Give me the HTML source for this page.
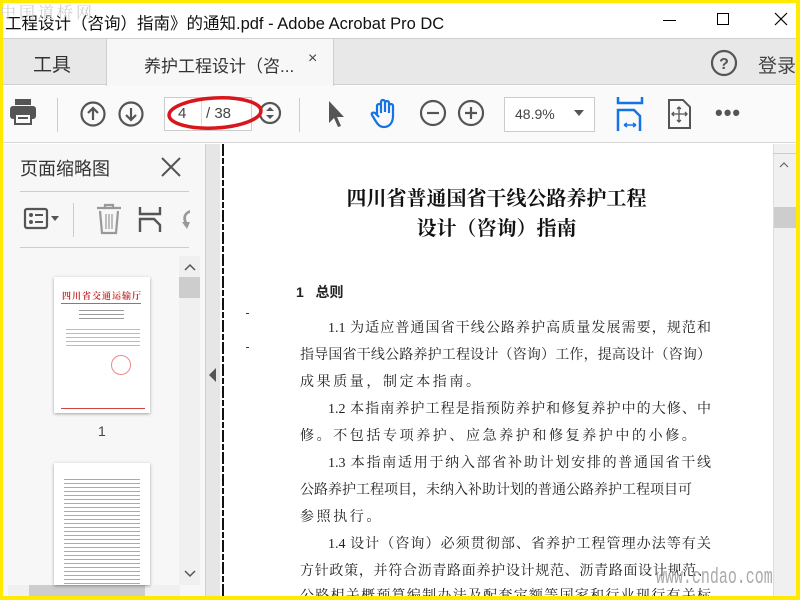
<!DOCTYPE html>
<html><head><meta charset="utf-8">
<style>
*{margin:0;padding:0;box-sizing:border-box}
body{width:800px;height:600px;overflow:hidden;background:#ffea00;font-family:"Liberation Sans","Noto Sans CJK SC",sans-serif;position:relative}
.a{position:absolute}
#win{left:3px;top:3px;width:793px;height:593px;background:#fff;overflow:hidden}
.doc{font-family:"Liberation Serif","Noto Serif CJK SC",serif;color:#222;font-size:14px}
.ln{position:absolute;left:297px;width:411px;text-align:justify;text-align-last:justify;white-space:nowrap;height:18px;line-height:18px}
.ic{stroke:#555;fill:none;stroke-width:2.2}
</style></head><body>
<div class="a" style="left:0;top:0;font-size:16px;color:#cfcfcf;letter-spacing:3px;z-index:5;font-family:'Noto Serif CJK SC',serif">中国道桥网</div>
<div class="a" id="win">
 <div class="a" style="left:0;top:0;width:793px;height:35px;background:#fff"></div>
 <div class="a" style="left:2px;top:7px;font-size:16.5px;color:#111;white-space:nowrap">工程设计（咨询）指南》的通知.pdf - Adobe Acrobat Pro DC</div>
 <div class="a" style="left:660px;top:17px;width:13px;height:1px;background:#000"></div>
 <div class="a" style="left:714px;top:10px;width:12px;height:12px;border:1px solid #000"></div>
 <svg class="a" style="left:771px;top:9px" width="14" height="14"><path d="M1 1L13 13M13 1L1 13" stroke="#000" stroke-width="1.2"/></svg>
 <div class="a" style="left:0;top:35px;width:793px;height:47px;background:#e8e8e8;border-top:1px solid #cfcfcf;border-bottom:1px solid #cfcfcf"></div>
 <div class="a" style="left:30px;top:47px;font-size:19px;color:#333">工具</div>
 <div class="a" style="left:103px;top:36px;width:228px;height:47px;background:#f7f7f7;border-left:1px solid #cfcfcf;border-right:1px solid #cfcfcf"></div>
 <div class="a" style="left:141px;top:49px;font-size:17px;color:#333;white-space:nowrap">养护工程设计（咨...</div>
 <div class="a" style="left:305px;top:47px;font-size:16px;color:#444">×</div>
 <svg class="a" style="left:707px;top:46px" width="28" height="28"><circle cx="14" cy="14" r="12" class="ic" stroke-width="2"/><text x="14" y="20" text-anchor="middle" font-size="16" font-weight="bold" fill="#555" font-family="Liberation Sans">?</text></svg>
 <div class="a" style="left:755px;top:48px;font-size:19px;color:#444">登录</div>
 <div class="a" style="left:0;top:83px;width:793px;height:57px;background:#fafafa;border-bottom:1px solid #d8d8d8"></div>
 <svg class="a" style="left:6px;top:95px" width="30" height="28"><rect x="6" y="1" width="16" height="6" fill="#555"/><rect x="1" y="8" width="26" height="13" rx="3" fill="#555"/><rect x="6" y="16" width="16" height="10" fill="#fafafa" stroke="#555" stroke-width="2"/><rect x="9" y="19" width="10" height="2" fill="#555"/></svg>
 <div class="a" style="left:54px;top:95px;width:1px;height:34px;background:#ccc"></div>
 <svg class="a" style="left:76px;top:97px" width="28" height="28"><circle cx="14" cy="14" r="11.5" class="ic"/><path d="M14 20V8M9 13l5-5 5 5" class="ic"/></svg>
 <svg class="a" style="left:114px;top:97px" width="28" height="28"><circle cx="14" cy="14" r="11.5" class="ic"/><path d="M14 8v12M9 15l5 5 5-5" class="ic"/></svg>
 <div class="a" style="left:161px;top:94px;width:88px;height:34px;border:1px solid #ccc;background:#fff"></div>
 <div class="a" style="left:198px;top:95px;width:1px;height:32px;background:#ddd"></div>
 <div class="a" style="left:175px;top:102px;font-size:15px;color:#444">4</div>
 <div class="a" style="left:203px;top:102px;font-size:15px;color:#444">/ 38</div>
 <svg class="a" style="left:254px;top:97px" width="28" height="28"><circle cx="13" cy="13" r="10" class="ic" stroke-width="2"/><path d="M9 11l4-4 4 4zM9 15l4 4 4-4z" fill="#555"/></svg>
 <svg class="a" style="left:160px;top:86px" width="120" height="50"><ellipse cx="52" cy="24" rx="46" ry="15" fill="none" stroke="#d8161c" stroke-width="3.5" transform="rotate(-3 52 24)"/></svg>
 <div class="a" style="left:296px;top:95px;width:1px;height:34px;background:#ccc"></div>
 <svg class="a" style="left:322px;top:96px" width="22" height="30"><path d="M4 2v22l5-5 4 9 3-1-4-9h7z" fill="#555"/></svg>
 <svg class="a" style="left:366px;top:94px" width="32" height="34"><path d="M8 18V9a2 2 0 014 0v7M12 15V5a2 2 0 014 0v10M16 15V6a2 2 0 014 0v10M20 16V9a2 2 0 014 0v10c0 7-4 11-9 11-4 0-6-2-9-7l-3-5c-1-2 1-3 3-2l4 4" fill="none" stroke="#1473e6" stroke-width="2.2" stroke-linejoin="round"/></svg>
 <svg class="a" style="left:416px;top:96px" width="28" height="28"><circle cx="14" cy="14" r="12" class="ic"/><path d="M8 14h12" class="ic"/></svg>
 <svg class="a" style="left:454px;top:96px" width="28" height="28"><circle cx="14" cy="14" r="12" class="ic"/><path d="M8 14h12M14 8v12" class="ic"/></svg>
 <div class="a" style="left:501px;top:94px;width:91px;height:35px;border:1px solid #ccc;background:#fff"></div>
 <div class="a" style="left:512px;top:103px;font-size:14px;color:#444">48.9%</div>
 <svg class="a" style="left:571px;top:107px" width="10" height="6"><path d="M0 0h10L5 6z" fill="#555"/></svg>
 <svg class="a" style="left:613px;top:94px" width="30" height="34"><path d="M2 0v6h24V0" fill="none" stroke="#1473e6" stroke-width="2.5"/><path d="M2 34V13h16l6 6v15" fill="none" stroke="#1473e6" stroke-width="2.5"/><path d="M8 28h12M8 28l3-2M8 28l3 2M20 28l-3-2M20 28l-3 2" stroke="#1473e6" stroke-width="1.5"/></svg>
 <svg class="a" style="left:664px;top:95px" width="26" height="32"><path d="M2 2h14l7 7v21H2z" fill="none" stroke="#555" stroke-width="2"/><path d="M12 9v15M5 16h15M10 11l2-2 2 2M10 22l2 2 2-2M7 14l-2 2 2 2M18 14l2 2-2 2" stroke="#555" stroke-width="1.3" fill="none"/></svg>
 <div class="a" style="left:712px;top:97px;font-size:22px;color:#555;letter-spacing:1px;font-weight:bold">•••</div>
 <div class="a" style="left:0;top:141px;width:202px;height:452px;background:#f7f7f7"></div>
 <div class="a" style="left:17px;top:152px;font-size:18px;color:#333">页面缩略图</div>
 <svg class="a" style="left:157px;top:153px" width="22" height="22"><path d="M2 2L20 20M20 2L2 20" stroke="#555" stroke-width="2"/></svg>
 <div class="a" style="left:17px;top:188px;width:169px;height:1px;background:#ccc"></div>
 <svg class="a" style="left:20px;top:203px" width="40" height="26"><rect x="2" y="3" width="22" height="19" rx="2" fill="none" stroke="#555" stroke-width="2.2"/><circle cx="8" cy="9" r="2" fill="#555"/><circle cx="8" cy="16" r="2" fill="#555"/><path d="M12 9h8M12 16h8" stroke="#555" stroke-width="2"/><path d="M28 10h8l-4 5z" fill="#555"/></svg>
 <div class="a" style="left:70px;top:200px;width:1px;height:34px;background:#ccc"></div>
 <svg class="a" style="left:92px;top:200px" width="28" height="32"><path d="M2 5h24M10 5V2h8v3M5 8l2 22h14l2-22" fill="none" stroke="#999" stroke-width="2.2"/><path d="M11 11v15M14 11v15M17 11v15" stroke="#999" stroke-width="1.2"/></svg>
 <svg class="a" style="left:134px;top:203px" width="26" height="28"><path d="M3 1v7h20V1M3 26v-13h14l6 6v7" fill="none" stroke="#555" stroke-width="2.4"/></svg>
 <svg class="a" style="left:175px;top:205px" width="14" height="26"><path d="M12 2C6 4 4 9 6 14l-2 0 5 7 3-7h-3C7 10 8 6 12 5z" fill="#999"/></svg>
 <div class="a" style="left:17px;top:244px;width:169px;height:1px;background:#ccc"></div>
 <div class="a" style="left:176px;top:253px;width:21px;height:329px;background:#f0f0f0"></div>
 <svg class="a" style="left:181px;top:260px" width="12" height="8"><path d="M1 7l5-5 5 5" stroke="#555" fill="none" stroke-width="1.5"/></svg>
 <div class="a" style="left:176px;top:274px;width:21px;height:21px;background:#cdcdcd"></div>
 <svg class="a" style="left:181px;top:567px" width="12" height="8"><path d="M1 1l5 5 5-5" stroke="#555" fill="none" stroke-width="1.5"/></svg>
 <div class="a" style="left:5px;top:582px;width:172px;height:11px;background:#f0f0f0"></div>
 <div class="a" style="left:26px;top:582px;width:116px;height:11px;background:#cdcdcd"></div>
 <div class="a" style="left:51px;top:274px;width:96px;height:136px;background:#fff;box-shadow:0 1px 3px rgba(0,0,0,.35)">
  <div class="a" style="left:8px;top:12px;font-size:9px;color:#c33;font-family:'Noto Serif CJK SC',serif;letter-spacing:1px;white-space:nowrap;font-weight:bold">四川省交通运输厅</div>
  <div class="a" style="left:7px;top:26px;width:80px;height:1px;background:#d55"></div>
  <div class="a" style="left:25px;top:32px;width:45px;height:12px;background:repeating-linear-gradient(#fff 0 1px,#999 1px 2px,#fff 2px 4px)"></div>
  <div class="a" style="left:12px;top:50px;width:74px;height:22px;background:repeating-linear-gradient(#fff 0 2px,#bbb 2px 3px,#fff 3px 4px)"></div>
  <div class="a" style="left:57px;top:78px;width:20px;height:20px;border:1px solid #e88;border-radius:50%"></div>
  <div class="a" style="left:7px;top:131px;width:84px;height:1px;background:#c44"></div>
 </div>
 <div class="a" style="left:95px;top:420px;font-size:14px;color:#444">1</div>
 <div class="a" style="left:51px;top:460px;width:96px;height:122px;background:#fff;box-shadow:0 1px 3px rgba(0,0,0,.35)">
  <div class="a" style="left:10px;top:14px;width:76px;height:108px;background:repeating-linear-gradient(#fff 0 2px,#aaa 2px 3px,#fff 3px 4px)"></div>
 </div>
 <div class="a" style="left:202px;top:141px;width:15px;height:452px;background:#e6e6e6;border-left:1px solid #d0d0d0"></div>
 <svg class="a" style="left:206px;top:365px" width="8" height="14"><path d="M7 0v14L0 7z" fill="#555"/></svg>
 <div class="a" style="left:217px;top:141px;width:553px;height:452px;background:#fff"></div>
 <div class="a" style="left:219px;top:141px;width:2px;height:452px;background:repeating-linear-gradient(#111 0 12px,#fff 12px 14px,#111 14px 20px,#fff 20px 22px)"></div>
 <div class="a" style="left:243px;top:310px;width:3px;height:1px;background:#333"></div>
 <div class="a" style="left:243px;top:344px;width:3px;height:1px;background:#333"></div>
 <div class="a" style="left:770px;top:141px;width:23px;height:452px;background:#f0f0f0;border-left:1px solid #ddd"></div>
 <div class="a" style="left:770px;top:150px;width:23px;height:1px;background:#ccc"></div>
 <svg class="a" style="left:776px;top:158px" width="10" height="7"><path d="M1 6l4-4 4 4" stroke="#666" fill="none" stroke-width="1.2"/></svg>
 <div class="a" style="left:771px;top:204px;width:22px;height:21px;background:#cdcdcd"></div>
 <div class="doc">
  <div class="a" style="left:217px;top:181px;width:553px;text-align:center;font-size:20px;font-weight:bold;color:#111;line-height:30px">四川省普通国省干线公路养护工程<br>设计（咨询）指南</div>
  <div class="a" style="left:293px;top:279px;font-size:14px;font-weight:bold;font-family:'Liberation Sans','Noto Sans CJK SC',sans-serif">1&nbsp;&nbsp;&nbsp;总则</div>
  <div class="ln" style="left:325px;width:383px;top:317px">1.1 为适应普通国省干线公路养护高质量发展需要，规范和</div>
  <div class="ln" style="top:344px">指导国省干线公路养护工程设计（咨询）工作，提高设计（咨询）</div>
  <div class="ln" style="top:371px;width:auto;letter-spacing:2.6px">成果质量，制定本指南。</div>
  <div class="ln" style="left:325px;width:383px;top:398px">1.2 本指南养护工程是指预防养护和修复养护中的大修、中</div>
  <div class="ln" style="top:425px;width:auto;letter-spacing:2.6px">修。不包括专项养护、应急养护和修复养护中的小修。</div>
  <div class="ln" style="left:325px;width:383px;top:452px">1.3 本指南适用于纳入部省补助计划安排的普通国省干线</div>
  <div class="ln" style="top:479px;width:383px">公路养护工程项目，未纳入补助计划的普通公路养护工程项目可</div>
  <div class="ln" style="top:506px;width:auto;letter-spacing:2.6px">参照执行。</div>
  <div class="ln" style="left:325px;width:383px;top:533px">1.4 设计（咨询）必须贯彻部、省养护工程管理办法等有关</div>
  <div class="ln" style="top:560px">方针政策，并符合沥青路面养护设计规范、沥青路面设计规范、</div>
  <div class="ln" style="top:585px">公路相关概预算编制办法及配套定额等国家和行业现行有关标</div>
 </div>
 <div class="a" style="left:653px;top:562px;font-size:22px;color:#aaa;font-family:'Liberation Mono',monospace;transform:scaleX(.68);transform-origin:left;letter-spacing:0px">www.cndao.com</div>
</div>
</body></html>
